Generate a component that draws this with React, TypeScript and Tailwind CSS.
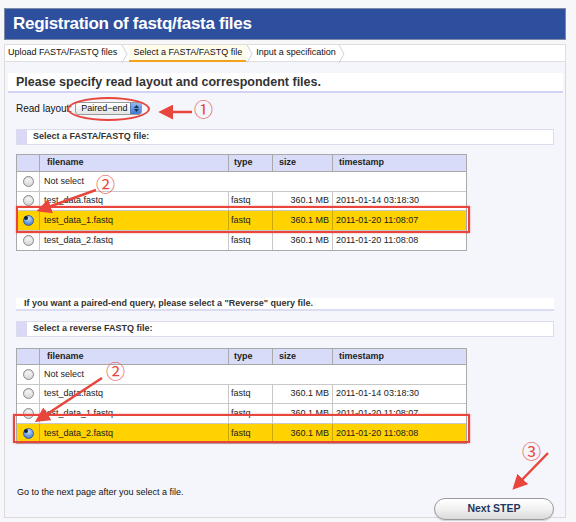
import React from "react";

const F = { fontFamily: '"Liberation Sans", Arial, sans-serif' };

function Radio({ on }: { on?: boolean }) {
  return on ? (
    <span className="inline-block w-[11px] h-[11px] rounded-full border border-[#3d5f9a] bg-[radial-gradient(circle_at_50%_30%,#c9def8_0%,#6c9ee0_55%,#2f67c4_100%)] flex items-center justify-center">
      <span className="block w-[4px] h-[4px] rounded-full bg-[#102040]" />
    </span>
  ) : (
    <span className="inline-block w-[11px] h-[11px] rounded-full border border-[#8a8a8a] bg-[linear-gradient(#fdfdfd,#d6d6d6)] shadow-[inset_0_1px_1px_rgba(0,0,0,0.15)]" />
  );
}

type Row = { name: string; type?: string; size?: string; ts?: string; sel?: boolean; none?: boolean };

function FileTable({ rows, headH }: { rows: Row[]; headH: string }) {
  return (
    <div className="w-[451px] border border-[#a9a9a9] bg-white text-[9px] text-[#222]">
      <div className={`grid grid-cols-[23px_189px_44px_60px_133px] ${headH} bg-[#d9dcf8] border-b border-[#a9a9a9] font-bold items-center`}>
        <div className="h-full border-r border-[#a9a9a9]" />
        <div className="h-full flex items-center pl-[7px] border-r border-[#a9a9a9]">filename</div>
        <div className="h-full flex items-center pl-[5px] border-r border-[#a9a9a9]">type</div>
        <div className="h-full flex items-center pl-[6px] border-r border-[#a9a9a9]">size</div>
        <div className="h-full flex items-center pl-[6px]">timestamp</div>
      </div>
      {rows.map((r, i) => {
        const line = r.sel ? "border-[#c9a800]" : "border-[#c8c8c8]";
        const last = i === rows.length - 1;
        return (
          <div
            key={i}
            className={`grid grid-cols-[23px_189px_44px_60px_133px] h-[19.5px] items-center ${r.sel ? "bg-[#ffd200]" : "bg-white"} ${last ? "" : "border-b border-[#c8c8c8]"}`}
          >
            <div className={`h-full flex items-center justify-center border-r ${line}`}>
              <Radio on={r.sel} />
            </div>
            {r.none ? (
              <div className="col-span-4 h-full flex items-center pl-[4px]">{r.name}</div>
            ) : (
              <>
                <div className={`h-full flex items-center pl-[4px] border-r ${line}`}>{r.name}</div>
                <div className={`h-full flex items-center pl-[2px] border-r ${line}`}>{r.type}</div>
                <div className={`h-full flex items-center justify-end pr-[3px] border-r ${line}`}>{r.size}</div>
                <div className="h-full flex items-center pl-[3px]">{r.ts}</div>
              </>
            )}
          </div>
        );
      })}
    </div>
  );
}

function SectionBand({ children }: { children: React.ReactNode }) {
  return (
    <div className="mx-[10px] h-[16px] bg-white border border-[#dcdcf0] flex items-stretch">
      <div className="w-[10px] bg-[#d9d9f6]" />
      <div className="flex items-center pl-[6px] text-[9px] font-bold text-[#333]">{children}</div>
    </div>
  );
}

function Chevron() {
  return (
    <svg width="8" height="18" viewBox="0 0 8 18" className="shrink-0">
      <path d="M1 0 L6 9 L1 18" fill="none" stroke="#d2d2d2" strokeWidth="1" />
    </svg>
  );
}

const RED = "#e8463c";

export default function App() {
  const rows1: Row[] = [
    { name: "Not select", none: true },
    { name: "test_data.fastq", type: "fastq", size: "360.1 MB", ts: "2011-01-14 03:18:30" },
    { name: "test_data_1.fastq", type: "fastq", size: "360.1 MB", ts: "2011-01-20 11:08:07", sel: true },
    { name: "test_data_2.fastq", type: "fastq", size: "360.1 MB", ts: "2011-01-20 11:08:08" },
  ];
  const rows2: Row[] = [
    { name: "Not select", none: true },
    { name: "test_data.fastq", type: "fastq", size: "360.1 MB", ts: "2011-01-14 03:18:30" },
    { name: "test_data_1.fastq", type: "fastq", size: "360.1 MB", ts: "2011-01-20 11:08:07" },
    { name: "test_data_2.fastq", type: "fastq", size: "360.1 MB", ts: "2011-01-20 11:08:08", sel: true },
  ];

  return (
    <div style={F} className="relative w-[576px] h-[522px] overflow-hidden bg-[#f7f7fa] pt-[8px] pl-[4px]">
      <div className="w-[562px]">
        {/* Title bar */}
        <div className="h-[32px] bg-[#2d4f9e] border border-[#7d8aa5] flex items-center pl-[8px]">
          <span className="text-white text-[17px] font-bold tracking-[-0.3px]">Registration of fastq/fasta files</span>
        </div>

        {/* Tabs */}
        <div className="mt-[4px] h-[18px] bg-white border border-[#dedede] flex items-stretch text-[9px] text-[#111]">
          <div className="flex items-center pl-[3px] pr-[4px]">Upload FASTA/FASTQ files</div>
          <Chevron />
          <div className="flex items-center px-[4px] bg-[#fffcec] border-b-2 border-[#f3a21c] -mb-px">Select a FASTA/FASTQ file</div>
          <Chevron />
          <div className="flex items-center px-[2px]">Input a specification</div>
          <Chevron />
        </div>

        {/* Panel */}
        <div className="h-[456px] bg-[#f5f5fc] border border-[#d9d9de] border-t-0 px-[1px]">
          <div className="pt-[11px]">
            <div className="ml-[2px] mr-[1px] h-[20px] bg-white border-b-2 border-[#d3d3f3] flex items-center pl-[8px]">
              <span className="text-[12.5px] font-bold text-[#333]">Please specify read layout and correspondent files.</span>
            </div>

            <div className="mt-[9px] h-[13px] flex items-center pl-[10px] text-[10px] text-[#111]">
              <span>Read layout:</span>
              <div className="ml-[3px] w-[67px] h-[13px] rounded-[3px] border border-[#9a9a9a] bg-[linear-gradient(#ffffff,#e4e4e4)] flex items-stretch overflow-hidden">
                <span className="flex-1 flex items-center pl-[5px] text-[9px] text-[#111]">Paired−end</span>
                <span className="w-[11px] bg-[linear-gradient(#8fb8ee,#3b78d3)] border-l border-[#5a7fb5] flex flex-col items-center justify-center gap-[1px]">
                  <svg width="5" height="3" viewBox="0 0 5 3"><path d="M0 3 L2.5 0 L5 3 Z" fill="#1a2a4a" /></svg>
                  <svg width="5" height="3" viewBox="0 0 5 3"><path d="M0 0 L2.5 3 L5 0 Z" fill="#1a2a4a" /></svg>
                </span>
              </div>
            </div>

            <div className="mt-[14px]">
              <SectionBand>Select a FASTA/FASTQ file:</SectionBand>
            </div>

            <div className="mt-[9px] ml-[10px]">
              <FileTable rows={rows1} headH="h-[17px]" />
            </div>

            <div className="mt-[47px] mx-[10px] h-[13px] bg-white border-b-2 border-[#dcdcf3] flex items-center pl-[8px]">
              <span className="text-[9px] font-bold text-[#333]">If you want a paired-end query, please select a "Reverse" query file.</span>
            </div>

            <div className="mt-[10px]">
              <SectionBand>Select a reverse FASTQ file:</SectionBand>
            </div>

            <div className="mt-[11px] ml-[10px]">
              <FileTable rows={rows2} headH="h-[16px]" />
            </div>

            <div className="mt-[43px] ml-[11px] h-[12px] flex items-center text-[9px] text-[#111]">
              Go to the next page after you select a file.
            </div>

            <div className="flex justify-end pr-[10px] -mt-[1px]">
              <button className="w-[120px] h-[22px] rounded-full border border-[#9b9b9b] bg-[linear-gradient(#ffffff_0%,#f1f1f1_50%,#dadada_100%)] shadow-[0_1px_1px_rgba(0,0,0,0.15)] text-[10.5px] font-bold text-[#1f3760]">
                Next STEP
              </button>
            </div>
          </div>
        </div>
      </div>

      {/* Annotations */}
      <div className="absolute left-[67px] top-[97px] w-[83px] h-[24px] rounded-[50%] border-2 border-[#e8463c]" />
      <div className="absolute left-[16px] top-[206px] w-[454px] h-[27px] border-2 border-[#e8463c] shadow-[0_0_2px_rgba(232,70,60,0.5)]" />
      <div className="absolute left-[13px] top-[414px] w-[457px] h-[29px] border-2 border-[#e8463c] shadow-[0_0_2px_rgba(232,70,60,0.5)]" />

      <span className="absolute left-[194px] top-[99px] text-[19px] leading-none text-[#e8463c]" style={{ fontFamily: '"Noto Sans CJK JP", sans-serif' }}>①</span>
      <span className="absolute left-[96px] top-[174px] text-[19px] leading-none text-[#e8463c]" style={{ fontFamily: '"Noto Sans CJK JP", sans-serif' }}>②</span>
      <span className="absolute left-[106px] top-[361px] text-[19px] leading-none text-[#e8463c]" style={{ fontFamily: '"Noto Sans CJK JP", sans-serif' }}>②</span>
      <span className="absolute left-[522px] top-[441px] text-[19px] leading-none text-[#e8463c]" style={{ fontFamily: '"Noto Sans CJK JP", sans-serif' }}>③</span>

      <svg className="absolute left-0 top-0 pointer-events-none" width="576" height="522" viewBox="0 0 576 522">
        <defs>
          <marker id="ah" markerWidth="6" markerHeight="6" refX="4.5" refY="3" orient="auto" markerUnits="strokeWidth">
            <path d="M0 0 L6 3 L0 6 Z" fill={RED} />
          </marker>
        </defs>
        <line x1="192" y1="112" x2="162" y2="112" stroke={RED} strokeWidth="2.5" markerEnd="url(#ah)" />
        <line x1="96" y1="190" x2="40" y2="210" stroke={RED} strokeWidth="2.5" markerEnd="url(#ah)" />
        <line x1="102" y1="378" x2="38" y2="420" stroke={RED} strokeWidth="2.5" markerEnd="url(#ah)" />
        <line x1="548" y1="453" x2="515" y2="487" stroke={RED} strokeWidth="2.5" markerEnd="url(#ah)" />
      </svg>
    </div>
  );
}
